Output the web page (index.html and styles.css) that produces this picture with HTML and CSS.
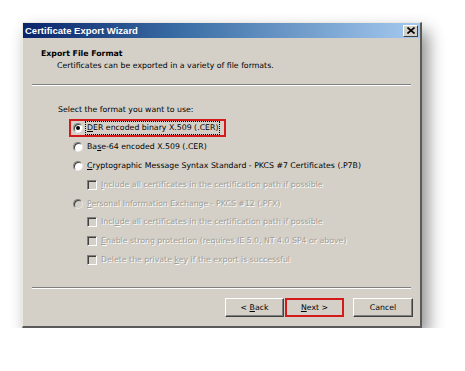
FILE: index.html
```html
<!DOCTYPE html>
<html>
<head>
<meta charset="utf-8">
<link rel="stylesheet" href="styles.css">
</head>
<body>
<div class="window">
  <div class="titlebar">
    <span class="title">Certificate Export Wizard</span>
    <span class="close">
      <svg width="8" height="7" viewBox="0 0 8 7"><path d="M0.5 0.5 L7.5 6.5 M7.5 0.5 L0.5 6.5" stroke="#000" stroke-width="1.6"/></svg>
    </span>
  </div>
  <div class="header">
    <div class="h-title">Export File Format</div>
    <div class="h-sub">Certificates can be exported in a variety of file formats.</div>
  </div>
  <div class="sep"></div>
  <div class="content">
    <div class="prompt">Select the format you want to use:</div>
    <div class="row radio-row highlight">
      <span class="radio checked"><span class="dot"></span></span>
      <span class="label focus"><u>D</u>ER encoded binary X.509 (.CER)</span>
    </div>
    <div class="row radio-row">
      <span class="radio"></span>
      <span class="label">Ba<u>s</u>e-64 encoded X.509 (.CER)</span>
    </div>
    <div class="row radio-row">
      <span class="radio"></span>
      <span class="label"><u>C</u>ryptographic Message Syntax Standard - PKCS #7 Certificates (.P7B)</span>
    </div>
    <div class="row check-row">
      <span class="check"></span>
      <span class="label disabled"><u>I</u>nclude all certificates in the certification path if possible</span>
    </div>
    <div class="row radio-row">
      <span class="radio disabled-radio"></span>
      <span class="label disabled"><u>P</u>ersonal Information Exchange - PKCS #12 (.PFX)</span>
    </div>
    <div class="row check-row">
      <span class="check"></span>
      <span class="label disabled">Incl<u>u</u>de all certificates in the certification path if possible</span>
    </div>
    <div class="row check-row">
      <span class="check"></span>
      <span class="label disabled"><u>E</u>nable strong protection (requires IE 5.0, NT 4.0 SP4 or above)</span>
    </div>
    <div class="row check-row">
      <span class="check"></span>
      <span class="label disabled">Delete the private <u>k</u>ey if the export is successful</span>
    </div>
  </div>
  <div class="sep"></div>
  <div class="buttons">
    <button class="btn">&lt; <u>B</u>ack</button>
    <button class="btn next"><u>N</u>ext &gt;</button>
    <button class="btn cancel">Cancel</button>
  </div>
</div>
</body>
</html>
```

FILE: styles.css
```css
html, body {
  margin: 0;
  padding: 0;
  background: #ffffff;
}
body {
  font-family: "DejaVu Sans", "Liberation Sans", sans-serif;
  font-size: 7.8px;
  color: #000;
  padding: 22px 0 0 22px;
}
.window {
  width: 400px;
  height: 306px;
  box-sizing: border-box;
  background: #d4d0c8;
  border-left: 1px solid #ece9e2;
  border-top: 1px solid #ece9e2;
  border-right: 2px solid #5a5a5a;
  border-bottom: 2px solid #5a5a5a;
  box-shadow: 6px 9px 16px rgba(0,0,0,0.45);
  display: flex;
  flex-direction: column;
}
.titlebar {
  height: 15px;
  flex: none;
  background: linear-gradient(to right, #0a246a 0%, #3a6ea5 40%, #a6caf0 100%);
  display: flex;
  align-items: center;
  justify-content: space-between;
  padding: 0 2px 0 2px;
}
.title {
  color: #fff;
  font-weight: bold;
  font-size: 9.5px;
  font-family: "Liberation Sans", "DejaVu Sans", sans-serif;
}
.close {
  width: 13px;
  height: 10px;
  background: #d4d0c8;
  border-top: 1px solid #fff;
  border-left: 1px solid #fff;
  border-right: 1px solid #404040;
  border-bottom: 1px solid #404040;
  display: flex;
  align-items: center;
  justify-content: center;
}
.close svg { display: block; }
.header {
  height: 46px;
  flex: none;
  box-sizing: border-box;
  padding-top: 10px;
}
.h-title {
  font-weight: bold;
  padding-left: 18px;
  height: 12px;
  line-height: 12px;
}
.h-sub {
  padding-left: 34px;
  height: 12px;
  line-height: 12px;
}
.sep {
  flex: none;
  margin: 0 9px;
  height: 0;
  border-top: 1px solid #808080;
  border-bottom: 1px solid #fff;
}
.content {
  flex: 1;
  padding-top: 18px;
  padding-left: 35px;
}
.prompt {
  height: 12px;
  line-height: 12px;
  margin-bottom: 3px;
}
.row {
  display: flex;
  align-items: center;
  height: 18.8px;
}
.radio-row { padding-left: 15px; }
.check-row { padding-left: 29px; }
.radio {
  width: 10px;
  height: 10px;
  box-sizing: border-box;
  border-radius: 50%;
  background: #fff;
  border: 1px solid;
  border-color: #808080 #e8e6e0 #e8e6e0 #808080;
  box-shadow: inset 1px 1px 0 #404040;
  display: flex;
  align-items: center;
  justify-content: center;
  margin-right: 3px;
  flex: none;
}
.radio.disabled-radio { background: #d4d0c8; }
.dot {
  width: 4px;
  height: 4px;
  border-radius: 50%;
  background: #000;
}
.check {
  width: 10px;
  height: 10px;
  box-sizing: border-box;
  background: #d4d0c8;
  border: 1px solid;
  border-color: #808080 #fff #fff #808080;
  box-shadow: inset 1px 1px 0 #404040;
  margin-right: 3px;
  flex: none;
}
.label {
  white-space: nowrap;
  line-height: 12px;
  padding: 0 1px;
}
.focus { outline: 1px dotted #000; outline-offset: 0; }
.disabled {
  color: #a09d95;
  text-shadow: 1px 1px 0 #fff;
}
.highlight {
  position: relative;
}
.highlight::before {
  content: "";
  position: absolute;
  left: 11px;
  top: 0;
  width: 157px;
  height: 18px;
  box-sizing: border-box;
  border: 2px solid #d41a1a;
}
.buttons {
  height: 37px;
  flex: none;
  display: flex;
  align-items: flex-start;
  justify-content: flex-end;
  padding: 9px 7px 0 0;
  box-sizing: border-box;
}
.btn {
  font-family: "DejaVu Sans", "Liberation Sans", sans-serif;
  font-size: 7.8px;
  width: 59px;
  height: 19px;
  padding: 0;
  background: #d4d0c8;
  border-top: 1px solid #fff;
  border-left: 1px solid #fff;
  border-right: 1px solid #404040;
  border-bottom: 1px solid #404040;
  box-shadow: inset -1px -1px 0 #808080;
  color: #000;
}
.next {
  margin-left: 1px;
  border: 2px solid #d41a1a;
  box-shadow: none;
}
.cancel {
  margin-left: 9px;
  width: 60px;
}
```
